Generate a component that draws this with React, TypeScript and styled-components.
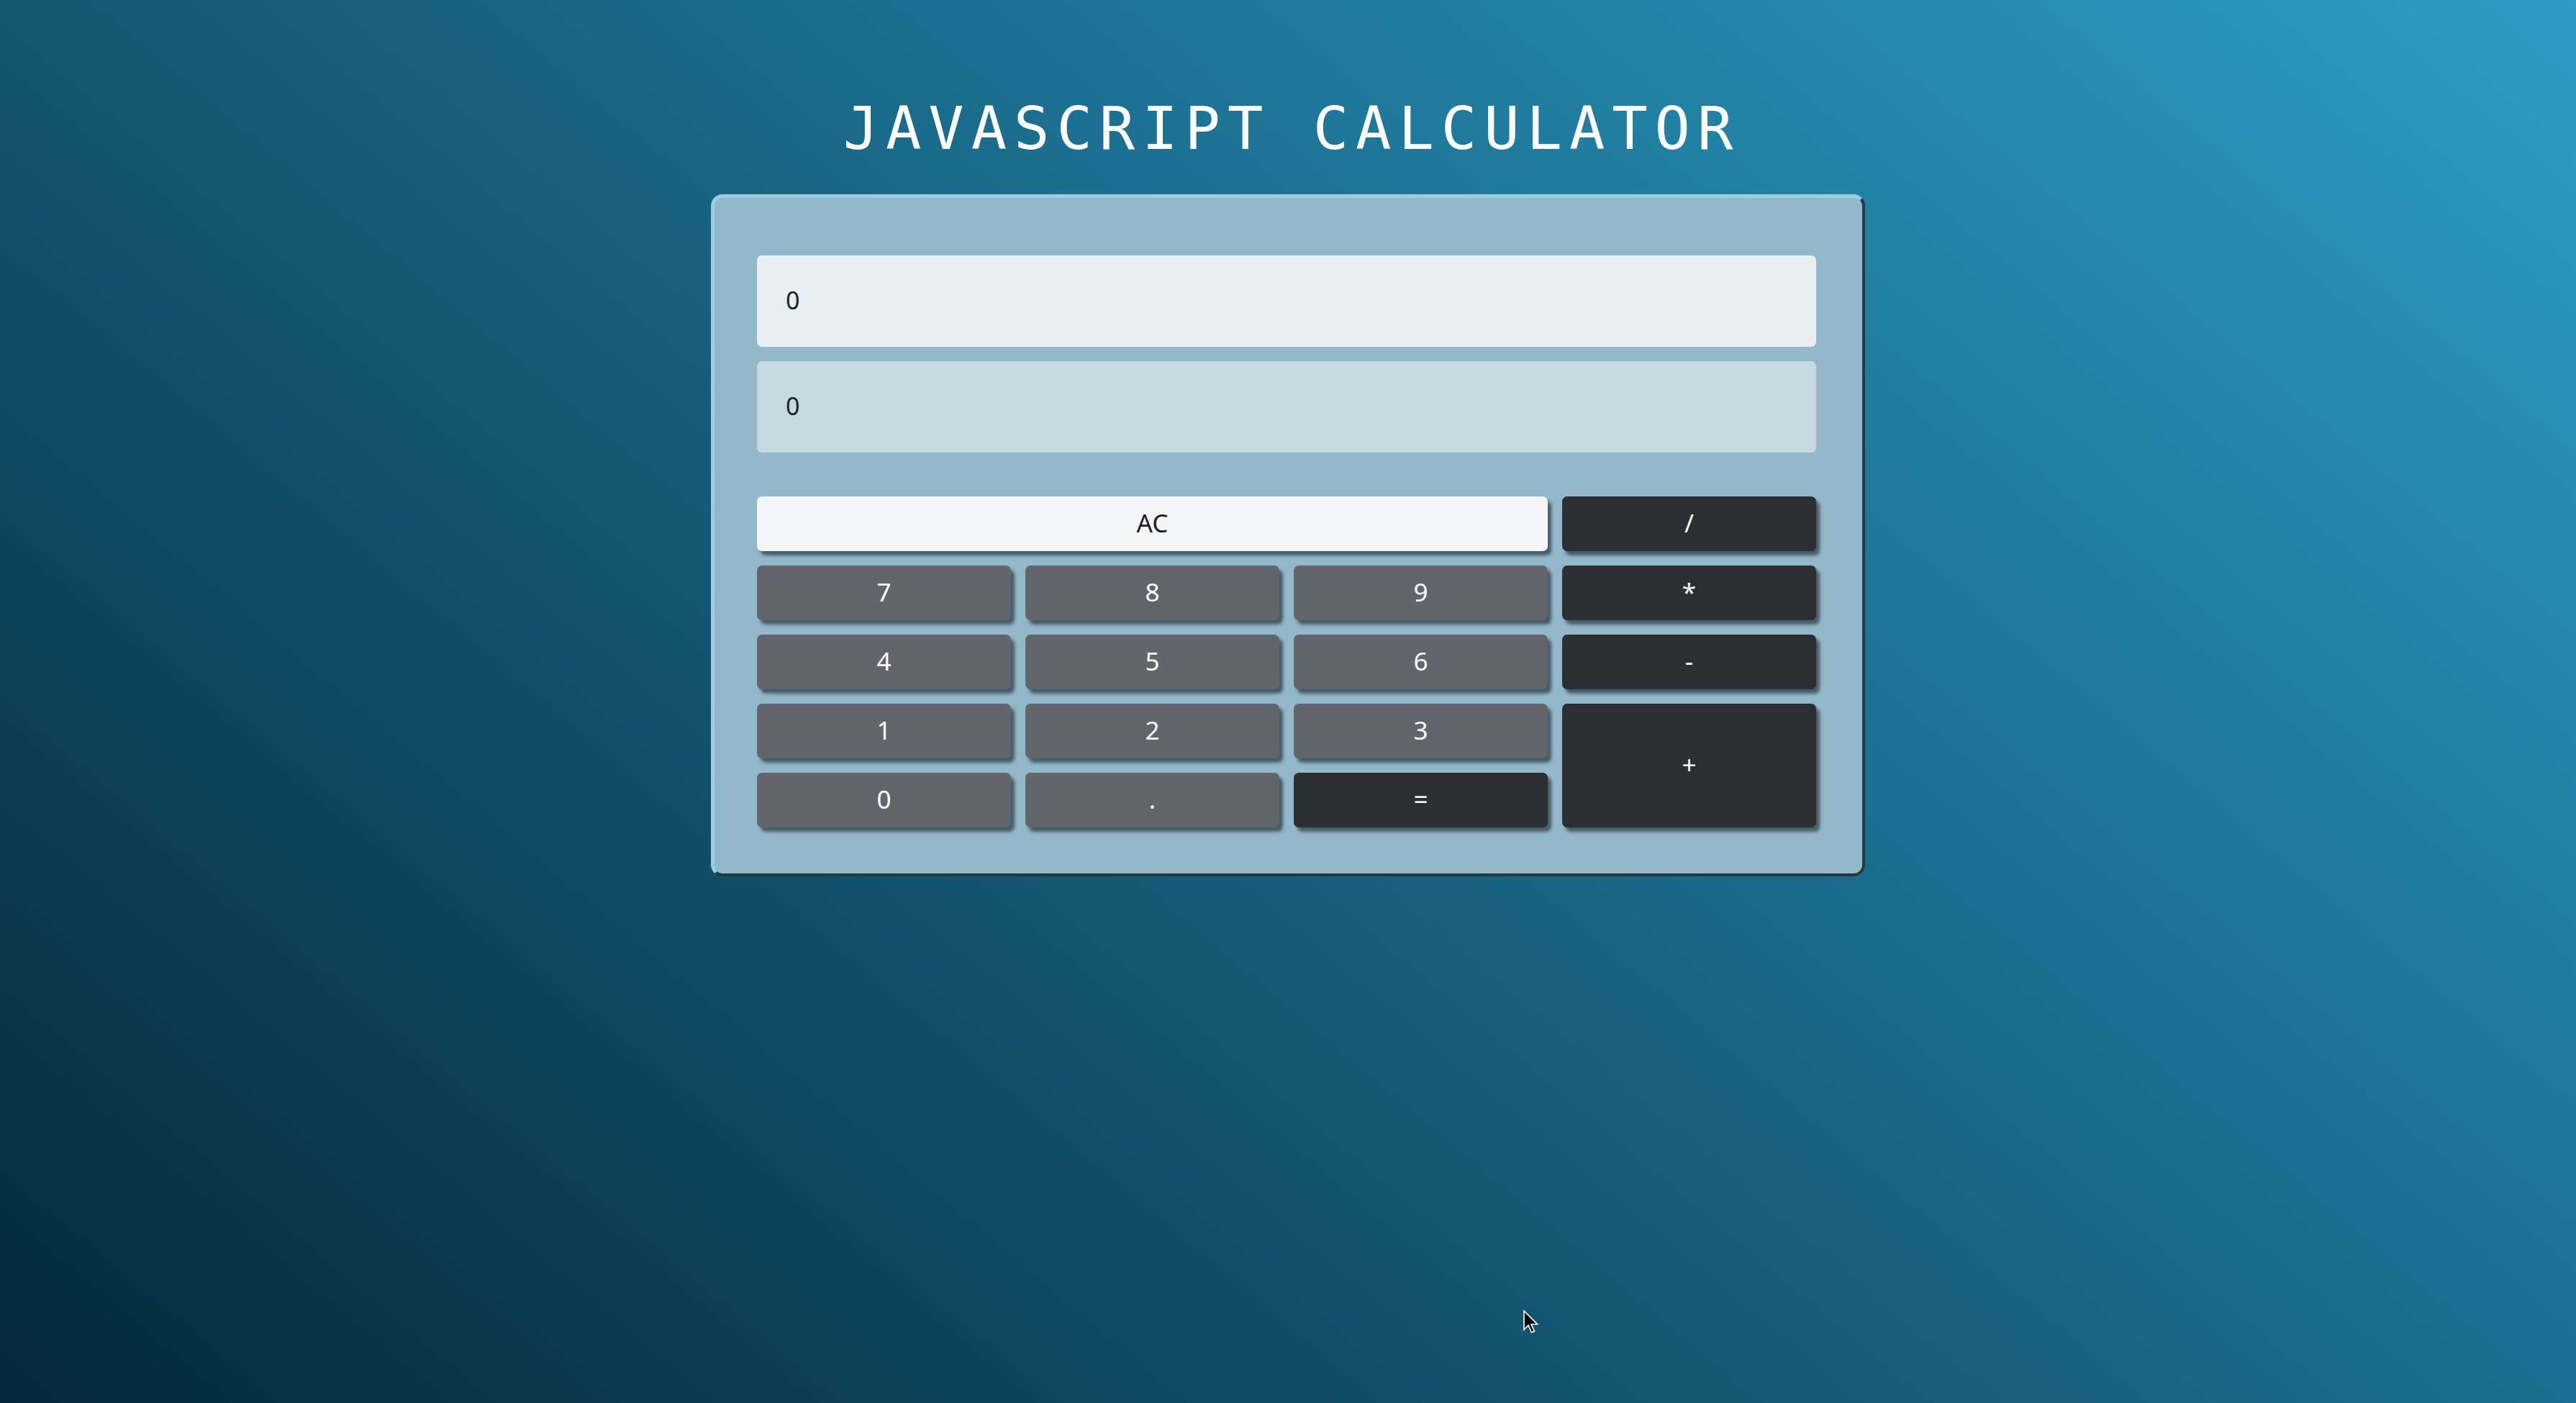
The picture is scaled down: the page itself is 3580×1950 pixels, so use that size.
import React from "react";
import styled, { createGlobalStyle } from "styled-components";

const GlobalStyle = createGlobalStyle`
  html, body {
    margin: 0;
    padding: 0;
  }
  body {
    font-family: "Noto Sans", "Open Sans", sans-serif;
  }
  * { box-sizing: border-box; }
`;

const Page = styled.div`
  position: relative;
  width: 100%;
  height: 100vh;
  background: linear-gradient(40deg, #04283a 0%, #2b9dc7 100%);
  display: flex;
  flex-direction: column;
  align-items: center;
  overflow: hidden;
`;

const Title = styled.h1`
  margin: 138px 0 50px 0;
  padding-left: 10px;
  font-family: "DejaVu Sans Mono", "Liberation Mono", monospace;
  font-weight: 400;
  font-size: 82px;
  line-height: 82px;
  letter-spacing: 10px;
  color: #ffffff;
  white-space: nowrap;
`;

const Panel = styled.div`
  width: 1604px;
  background: #93b8ca;
  border-style: solid;
  border-width: 5px 4px 4px 5px;
  border-color: #9dcbe2 #233940 #233940 #9dcbe2;
  border-radius: 16px;
  padding: 80px 64px 64px 59px;
  display: flex;
  flex-direction: column;
`;

const Display = styled.div<{ $tone: "main" | "sub" }>`
  height: 127px;
  border-radius: 7px;
  background: ${(p) => (p.$tone === "main" ? "#e9eef0" : "#c6d9e0")};
  color: #17262c;
  font-family: "Noto Sans", "Open Sans", sans-serif;
  font-size: 34px;
  display: flex;
  align-items: center;
  padding: 0 0 4px 40px;
  margin-bottom: ${(p) => (p.$tone === "main" ? "20px" : "61px")};
`;

const Keypad = styled.div`
  display: grid;
  grid-template-columns: repeat(4, 1fr);
  grid-auto-rows: 76px;
  gap: 20px;
`;

type Tone = "digit" | "op" | "clear";

const Key = styled.button<{ $tone: Tone; $col?: string; $row?: string }>`
  border: none;
  border-radius: 7px;
  font-family: "Noto Sans", "Open Sans", sans-serif;
  font-size: 35px;
  font-weight: 400;
  cursor: pointer;
  box-shadow: 5px 6px 4px rgba(20, 30, 35, 0.6);
  background: ${(p) =>
    p.$tone === "digit" ? "#62666b" : p.$tone === "op" ? "#2b2f32" : "#f4f5f7"};
  color: ${(p) => (p.$tone === "clear" ? "#1b1d20" : "#ffffff")};
  grid-column: ${(p) => p.$col ?? "auto"};
  grid-row: ${(p) => p.$row ?? "auto"};
  display: flex;
  align-items: center;
  justify-content: center;
  padding: 0 0 4px 0;
`;

const Cursor = styled.svg`
  position: absolute;
  left: 2116px;
  top: 1821px;
  width: 24px;
  height: 36px;
`;

export default function App() {
  return (
    <>
      <GlobalStyle />
      <Page>
        <Title>JAVASCRIPT CALCULATOR</Title>
        <Panel>
          <Display $tone="main">0</Display>
          <Display $tone="sub">0</Display>
          <Keypad>
            <Key $tone="clear" $col="1 / span 3">AC</Key>
            <Key $tone="op">/</Key>
            <Key $tone="digit">7</Key>
            <Key $tone="digit">8</Key>
            <Key $tone="digit">9</Key>
            <Key $tone="op">*</Key>
            <Key $tone="digit">4</Key>
            <Key $tone="digit">5</Key>
            <Key $tone="digit">6</Key>
            <Key $tone="op">-</Key>
            <Key $tone="digit">1</Key>
            <Key $tone="digit">2</Key>
            <Key $tone="digit">3</Key>
            <Key $tone="op" $col="4" $row="4 / span 2">+</Key>
            <Key $tone="digit">0</Key>
            <Key $tone="digit">.</Key>
            <Key $tone="op">=</Key>
          </Keypad>
        </Panel>
        <Cursor viewBox="0 0 24 36">
          <path
            d="M2 1 L2 27 L8 21 L12.5 31 L16.5 29.3 L12 19.5 L20.5 19.5 Z"
            fill="#000000"
            stroke="#ffffff"
            strokeWidth="1.6"
            strokeLinejoin="miter"
          />
        </Cursor>
      </Page>
    </>
  );
}
